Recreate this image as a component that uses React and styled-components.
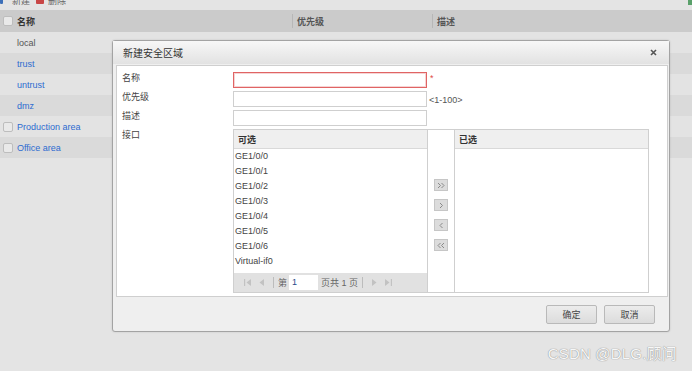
import styled, { createGlobalStyle } from "styled-components";

const GlobalStyle = createGlobalStyle`
  html, body { margin: 0; padding: 0; }
  body {
    background: #e4e4e4;
    font-family: "Liberation Sans", Arial, "Noto Sans CJK SC", sans-serif;
    font-size: 9px;
    color: #444;
  }
`;

const Page = styled.div`
  position: relative;
  width: 692px;
  height: 371px;
  overflow: hidden;
  background: #e4e4e4;
`;

const Toolbar = styled.div`
  height: 10px;
  overflow: hidden;
`;

const ToolRow = styled.div`
  display: flex;
  align-items: center;
  height: 12px;
  margin-top: -6px;
`;

const ToolItem = styled.div`
  display: flex;
  align-items: center;
  gap: 4px;
  margin-left: ${(p) => p.$ml}px;
  color: #666;
`;

const ToolIcon = styled.span`
  width: ${(p) => p.$w}px;
  height: 8px;
  background: ${(p) => p.$c};
  border-radius: 1px;
`;

const GreenMark = styled.span`
  margin-left: auto;
  width: 4px;
  height: 9px;
  background: #5aa06a;
`;

const Table = styled.div`
  display: flex;
  flex-direction: column;
`;

const HeadRow = styled.div`
  display: grid;
  grid-template-columns: 292px 140px 1fr;
  align-items: center;
  height: 22px;
  background: #cbcbcb;
  color: #333;
  font-weight: bold;
`;

const Row = styled.div`
  display: grid;
  grid-template-columns: 292px 140px 1fr;
  align-items: center;
  height: 21px;
  background: ${(p) => (p.$alt ? "#dadada" : "#e3e3e3")};
`;

const NameCell = styled.div`
  display: flex;
  align-items: center;
  gap: 4px;
  padding-left: 3px;
  color: ${(p) => (p.$link ? "#2d6bd0" : "#555")};
`;

const Cell = styled.div`
  display: flex;
  align-items: center;
  height: 14px;
  padding-left: 4px;
  border-left: ${(p) => (p.$sep ? "1px solid #b7b7b7" : "none")};
  color: #555;
`;

const CheckSlot = styled.span`
  width: 10px;
  height: 10px;
  box-sizing: border-box;
  border-radius: 2px;
  border: ${(p) => (p.$on ? "1px solid #bdbdbd" : "none")};
  background: ${(p) => (p.$on ? "#e9e9e9" : "transparent")};
`;

const Dialog = styled.div`
  position: absolute;
  left: 112px;
  top: 40px;
  width: 558px;
  height: 292px;
  box-sizing: border-box;
  border: 1px solid #a3a3a3;
  border-radius: 3px;
  background: #efefef;
  display: flex;
  flex-direction: column;
  box-shadow: 0 0 2px rgba(0, 0, 0, 0.15);
`;

const DialogHead = styled.div`
  height: 23px;
  flex: none;
  display: flex;
  align-items: center;
  justify-content: space-between;
  padding: 0 12px 0 10px;
  background: linear-gradient(#f7f7f7, #e2e2e2);
  font-size: 10px;
  color: #333;
`;

const CloseBtn = styled.span`
  display: flex;
  width: 7px;
  height: 7px;
`;

const DialogBody = styled.div`
  height: 232px;
  flex: none;
  box-sizing: border-box;
  margin: 1px 1px 0 3px;
  padding: 6px 5px 0;
  background: #fff;
  border: 1px solid #cfcfcf;
  display: flex;
  flex-direction: column;
`;

const FormRow = styled.div`
  display: grid;
  grid-template-columns: 111px auto 1fr;
  align-items: start;
  min-height: 19px;
`;

const Label = styled.div`
  line-height: 13px;
  color: #444;
`;

const TextInput = styled.div`
  width: 194px;
  height: 16px;
  box-sizing: border-box;
  border: 1px solid ${(p) => (p.$error ? "#e06464" : "#cfcfcf")};
  box-shadow: ${(p) => (p.$error ? "inset 0 0 0 1px #f6d4d4" : "none")};
  background: #fff;
`;

const Hint = styled.span`
  padding-left: ${(p) => (p.$star ? 3 : 2)}px;
  line-height: ${(p) => (p.$star ? 12 : 18)}px;
  color: ${(p) => (p.$star ? "#e04848" : "#555")};
`;

const Transfer = styled.div`
  display: flex;
  width: 416px;
  height: 164px;
  box-sizing: border-box;
  border: 1px solid #cfcfcf;
`;

const Panel = styled.div`
  width: 194px;
  display: flex;
  flex-direction: column;
  border-left: ${(p) => (p.$right ? "1px solid #cfcfcf" : "none")};
  border-right: ${(p) => (p.$right ? "none" : "1px solid #cfcfcf")};
  box-sizing: border-box;
`;

const PanelHead = styled.div`
  height: 19px;
  box-sizing: border-box;
  display: flex;
  align-items: center;
  padding-left: 4px;
  background: #efefef;
  border-bottom: 1px solid #d9d9d9;
  font-weight: bold;
  color: #333;
`;

const ItemList = styled.div`
  flex: 1;
  padding-left: 1px;
`;

const Item = styled.div`
  height: 15px;
  line-height: 15px;
  color: #444;
`;

const Pager = styled.div`
  height: 19px;
  display: flex;
  align-items: center;
  background: #e1e1e1;
  padding-left: 9px;
  color: #666;
`;

const PageIcon = styled.span`
  display: flex;
  margin-right: ${(p) => p.$mr}px;
`;

const PageSep = styled.span`
  width: 1px;
  height: 11px;
  background: #bcbcbc;
  margin: 0 ${(p) => p.$mr}px 0 0;
`;

const PageInput = styled.span`
  width: 29px;
  height: 15px;
  box-sizing: border-box;
  background: #fff;
  padding-left: 3px;
  line-height: 15px;
  margin: 0 3px 0 2px;
  color: #2a4a8a;
`;

const Mover = styled.div`
  width: 26px;
  display: flex;
  flex-direction: column;
  align-items: center;
  gap: 8px;
  padding-top: 49px;
  box-sizing: border-box;
`;

const MoveBtn = styled.span`
  width: 14px;
  height: 12px;
  box-sizing: border-box;
  display: flex;
  align-items: center;
  justify-content: center;
  background: #dcdcdc;
  border: 1px solid #c6c6c6;
`;

const Footer = styled.div`
  flex: 1;
  display: flex;
  align-items: center;
  justify-content: flex-end;
  gap: 7px;
  padding-right: 14px;
`;

const Button = styled.span`
  width: 51px;
  height: 19px;
  box-sizing: border-box;
  display: flex;
  align-items: center;
  justify-content: center;
  border: 1px solid #b9b9b9;
  border-radius: 2px;
  background: linear-gradient(#ececec, #dcdcdc);
  color: #444;
`;

const Watermark = styled.div`
  position: absolute;
  right: 15px;
  bottom: 8px;
  font-size: 15px;
  color: #f7f7f7;
  text-shadow: 0 0 1px #8c8c8c, 0 0 1px #a0a0a0;
  letter-spacing: 0.2px;
`;

const rows = [
  { name: "local", prio: "100" },
  { name: "trust", prio: "85", link: true },
  { name: "untrust", prio: "5", link: true },
  { name: "dmz", prio: "50", link: true },
  { name: "Production area", prio: "", link: true, check: true },
  { name: "Office area", prio: "", link: true, check: true },
];

const ports = [
  "GE1/0/0",
  "GE1/0/1",
  "GE1/0/2",
  "GE1/0/3",
  "GE1/0/4",
  "GE1/0/5",
  "GE1/0/6",
  "Virtual-if0",
];

const Chevrons = ({ dir, n }) => {
  const pts = dir === "r" ? "1,1 3.5,3.5 1,6" : "3.5,1 1,3.5 3.5,6";
  return (
    <svg width={n === 2 ? 8 : 5} height="7" viewBox={`0 0 ${n === 2 ? 8 : 5} 7`}>
      <polyline points={pts} fill="none" stroke="#8a8a8a" strokeWidth="1" />
      {n === 2 && (
        <polyline
          points={pts}
          transform="translate(3.5 0)"
          fill="none"
          stroke="#8a8a8a"
          strokeWidth="1"
        />
      )}
    </svg>
  );
};

const PagerGlyph = ({ kind }) => {
  const c = "#c2c2c2";
  return (
    <svg width="9" height="9" viewBox="0 0 9 9">
      {kind === "first" && (
        <>
          <rect x="1" y="1" width="1.2" height="7" fill={c} />
          <polygon points="8,1 3.5,4.5 8,8" fill={c} />
        </>
      )}
      {kind === "prev" && <polygon points="6,1 1.5,4.5 6,8" fill={c} />}
      {kind === "next" && <polygon points="2,1 6.5,4.5 2,8" fill={c} />}
      {kind === "last" && (
        <>
          <polygon points="1,1 5.5,4.5 1,8" fill={c} />
          <rect x="6.8" y="1" width="1.2" height="7" fill={c} />
        </>
      )}
    </svg>
  );
};

export default function App() {
  return (
    <>
      <GlobalStyle />
      <Page>
        <Toolbar>
          <ToolRow>
            <ToolItem $ml={0}>
              <ToolIcon $w={3} $c="#3d6fb8" />
            </ToolItem>
            <ToolItem $ml={9}>新建</ToolItem>
            <ToolItem $ml={6}>
              <ToolIcon $w={8} $c="#c84646" />
              删除
            </ToolItem>
            <GreenMark />
          </ToolRow>
        </Toolbar>

        <Table>
          <HeadRow>
            <NameCell style={{ color: "#333" }}>
              <CheckSlot $on />
              名称
            </NameCell>
            <Cell $sep>优先级</Cell>
            <Cell $sep>描述</Cell>
          </HeadRow>
          {rows.map((r, i) => (
            <Row key={r.name} $alt={i % 2 === 1}>
              <NameCell $link={r.link}>
                <CheckSlot $on={r.check} />
                {r.name}
              </NameCell>
              <Cell>{r.prio}</Cell>
              <Cell />
            </Row>
          ))}
        </Table>

        <Dialog>
          <DialogHead>
            新建安全区域
            <CloseBtn>
              <svg width="7" height="7" viewBox="0 0 7 7">
                <path d="M1 1L6 6M6 1L1 6" stroke="#555" strokeWidth="1.6" />
              </svg>
            </CloseBtn>
          </DialogHead>

          <DialogBody>
            <FormRow>
              <Label>名称</Label>
              <TextInput $error />
              <Hint $star>*</Hint>
            </FormRow>
            <FormRow>
              <Label>优先级</Label>
              <TextInput />
              <Hint>&lt;1-100&gt;</Hint>
            </FormRow>
            <FormRow>
              <Label>描述</Label>
              <TextInput />
            </FormRow>
            <FormRow>
              <Label>接口</Label>
              <Transfer>
                <Panel>
                  <PanelHead>可选</PanelHead>
                  <ItemList>
                    {ports.map((p) => (
                      <Item key={p}>{p}</Item>
                    ))}
                  </ItemList>
                  <Pager>
                    <PageIcon $mr={6}>
                      <PagerGlyph kind="first" />
                    </PageIcon>
                    <PageIcon $mr={6}>
                      <PagerGlyph kind="prev" />
                    </PageIcon>
                    <PageSep $mr={4} />
                    第
                    <PageInput>1</PageInput>
                    页共 1 页
                    <PageSep $mr={7} style={{ marginLeft: 4 }} />
                    <PageIcon $mr={5}>
                      <PagerGlyph kind="next" />
                    </PageIcon>
                    <PageIcon $mr={0}>
                      <PagerGlyph kind="last" />
                    </PageIcon>
                  </Pager>
                </Panel>
                <Mover>
                  <MoveBtn>
                    <Chevrons dir="r" n={2} />
                  </MoveBtn>
                  <MoveBtn>
                    <Chevrons dir="r" n={1} />
                  </MoveBtn>
                  <MoveBtn>
                    <Chevrons dir="l" n={1} />
                  </MoveBtn>
                  <MoveBtn>
                    <Chevrons dir="l" n={2} />
                  </MoveBtn>
                </Mover>
                <Panel $right>
                  <PanelHead>已选</PanelHead>
                </Panel>
              </Transfer>
            </FormRow>
          </DialogBody>

          <Footer>
            <Button>确定</Button>
            <Button>取消</Button>
          </Footer>
        </Dialog>

        <Watermark>CSDN @DLG.顾问</Watermark>
      </Page>
    </>
  );
}
